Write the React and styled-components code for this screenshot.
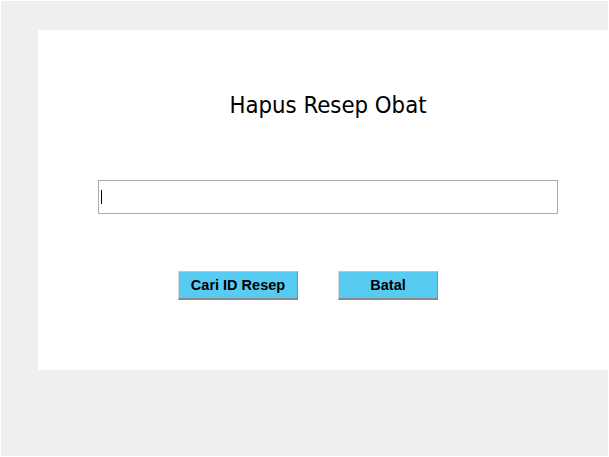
import React from "react";
import styled, { createGlobalStyle } from "styled-components";

const Global = createGlobalStyle`
  html, body { margin: 0; padding: 0; background: #ffffff; }
  body { width: 609px; height: 457px; overflow: hidden; }
`;

const Frame = styled.div`
  box-sizing: border-box;
  margin: 1px 1px 1px 1px;
  width: 607px;
  height: 455px;
  background: #efefef;
  padding: 29px 0 0 37px;
`;

const Panel = styled.div`
  box-sizing: border-box;
  width: 570px;
  height: 340px;
  background: #ffffff;
  display: flex;
  flex-direction: column;
  padding: 0 0 0 60px;
`;

const Title = styled.h1`
  margin: 0;
  width: 460px;
  padding-top: 61px;
  text-align: center;
  font-family: "DejaVu Sans Condensed", "DejaVu Sans", sans-serif;
  font-weight: normal;
  font-size: 23.7px;
  line-height: 28px;
  color: #000000;
`;

const Field = styled.div`
  box-sizing: border-box;
  margin-top: 61px;
  width: 460px;
  height: 34px;
  border: 1px solid #ababab;
  background: #ffffff;
  display: flex;
  align-items: flex-start;
  padding: 9px 0 0 2px;
`;

const Caret = styled.span`
  display: block;
  width: 1px;
  height: 14px;
  background: #000000;
`;

const Buttons = styled.div`
  display: flex;
  gap: 40px;
  margin: 57px 0 0 80px;
`;

const Button = styled.button`
  box-sizing: border-box;
  width: ${(p) => p.$w}px;
  height: 29px;
  padding: 0;
  background: #58cbf2;
  border-top: 1px solid #c4c4c4;
  border-left: 1px solid #d6d6d6;
  border-right: 1px solid #8a8a8a;
  border-bottom: 2px solid #8a8a8a;
  font-family: "Liberation Sans", Arial, sans-serif;
  font-weight: bold;
  font-size: 14.5px;
  color: #000000;
  display: flex;
  align-items: center;
  justify-content: center;
  cursor: pointer;
`;

export default function App() {
  return (
    <>
      <Global />
      <Frame>
        <Panel>
          <Title>Hapus Resep Obat</Title>
          <Field>
            <Caret />
          </Field>
          <Buttons>
            <Button $w={120}>Cari ID Resep</Button>
            <Button $w={100}>Batal</Button>
          </Buttons>
        </Panel>
      </Frame>
    </>
  );
}
